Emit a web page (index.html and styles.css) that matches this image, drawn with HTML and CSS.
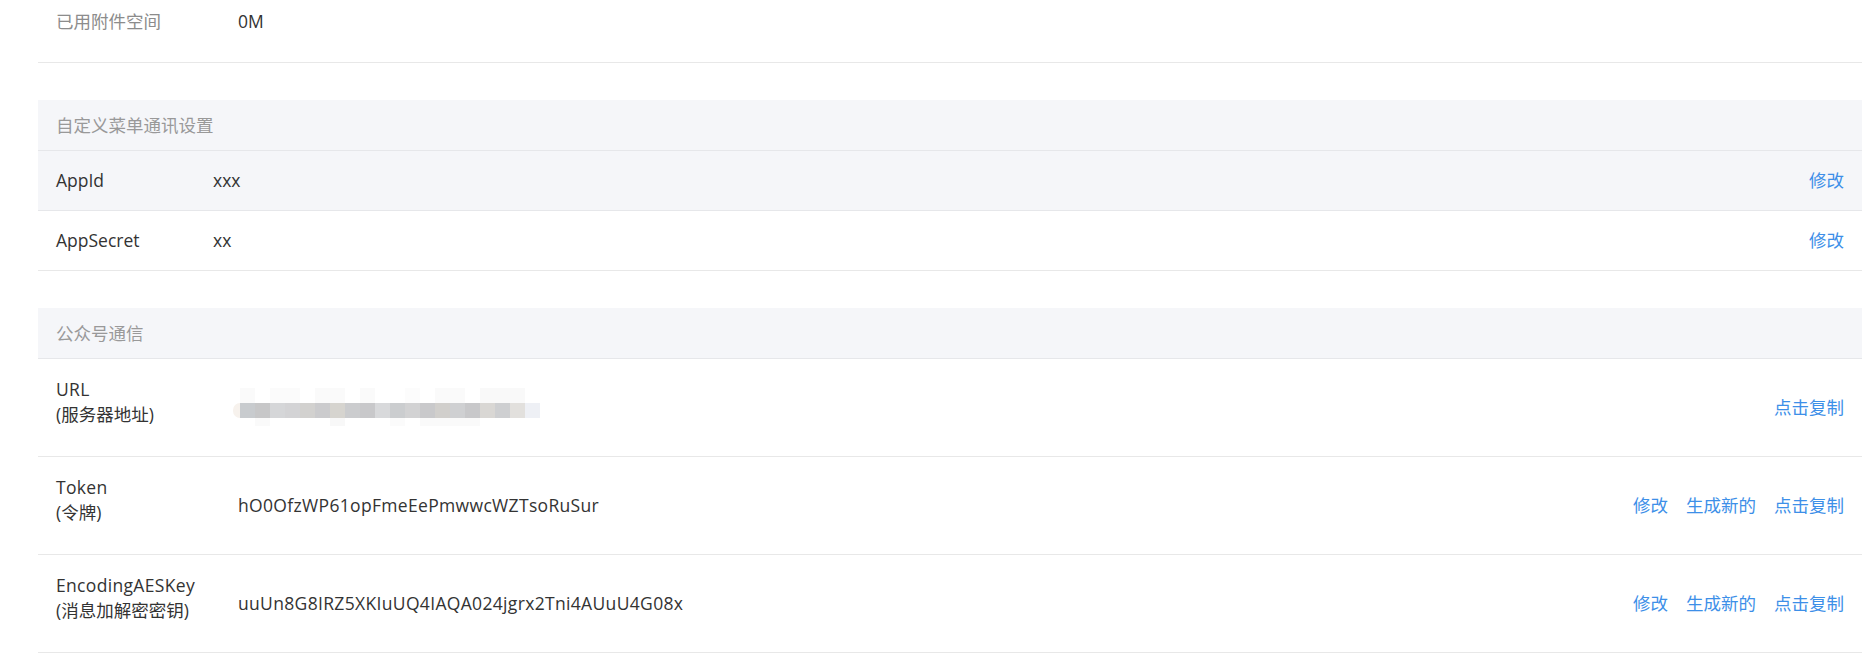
FILE: index.html
```html
<!DOCTYPE html>
<html lang="zh-CN">
<head>
<meta charset="utf-8">
<title>设置</title>
<link rel="stylesheet" href="styles.css">
</head>
<body>
<div class="page">
  <div class="stat-row">
    <span class="stat-label">已用附件空间</span>
    <span class="stat-value">0M</span>
  </div>

  <section class="panel panel--menu">
    <div class="panel-head">自定义菜单通讯设置</div>
    <div class="row row--short row--active">
      <div class="row-label">AppId</div>
      <div class="row-value">xxx</div>
      <div class="row-actions"><a class="link">修改</a></div>
    </div>
    <div class="row row--short">
      <div class="row-label">AppSecret</div>
      <div class="row-value">xx</div>
      <div class="row-actions"><a class="link">修改</a></div>
    </div>
  </section>

  <section class="panel panel--mp">
    <div class="panel-head">公众号通信</div>
    <div class="row row--tall">
      <div class="row-label"><div class="latin">URL</div><div>(服务器地址)</div></div>
      <div class="row-value"><div class="blurred"><div class="blurred-top"></div><div class="blurred-bar"></div><div class="blurred-bottom"></div></div></div>
      <div class="row-actions"><a class="link">点击复制</a></div>
    </div>
    <div class="row row--tall">
      <div class="row-label"><div class="latin">Token</div><div>(令牌)</div></div>
      <div class="row-value latin">hO0OfzWP61opFmeEePmwwcWZTsoRuSur</div>
      <div class="row-actions"><a class="link">修改</a><a class="link">生成新的</a><a class="link">点击复制</a></div>
    </div>
    <div class="row row--tall">
      <div class="row-label"><div class="latin">EncodingAESKey</div><div>(消息加解密密钥)</div></div>
      <div class="row-value latin">uuUn8G8IRZ5XKIuUQ4IAQA024jgrx2Tni4AUuU4G08x</div>
      <div class="row-actions"><a class="link">修改</a><a class="link">生成新的</a><a class="link">点击复制</a></div>
    </div>
  </section>
</div>
</body>
</html>
```

FILE: styles.css
```css
html, body {
  margin: 0;
  padding: 0;
  background: #ffffff;
}

body {
  font-family: "Open Sans", "Noto Sans CJK SC", sans-serif;
  font-size: 17.5px;
  line-height: 25px;
  color: #333333;
}

.page {
  margin-left: 38px;
  width: 1824px;
}

.stat-row {
  display: flex;
  padding: 9px 18px 28px;
  border-bottom: 1px solid #e8e8e8;
}

.stat-label {
  width: 182px;
  flex: none;
  color: #8c8c8c;
}

.stat-value {
  color: #333333;
}

.panel {
  margin-top: 37px;
}

.panel-head {
  height: 50px;
  line-height: 51px;
  padding: 0 18px;
  background: #f5f6f9;
  border-bottom: 1px solid #e6e7ea;
  color: #999999;
}

.row {
  display: flex;
  align-items: center;
  padding: 0 18px;
  border-bottom: 1px solid #e8e8e8;
}

.row--short {
  height: 59px;
}

.row--tall {
  height: 97px;
}

.row--active {
  background: #f5f6f9;
  border-bottom-color: #e6e7ea;
}

.row-label {
  flex: none;
  color: #333333;
}

.panel--menu .row-label {
  width: 157px;
}

.panel--mp .row-label {
  width: 182px;
  padding-bottom: 11px;
}

.row-value {
  flex: 1;
  color: #333333;
}

.latin {
  letter-spacing: 0.33px;
}

.row-actions {
  display: flex;
  margin-left: auto;
}

.link {
  color: #3d8fe8;
  cursor: pointer;
  margin-left: 18px;
}

.blurred {
  position: relative;
  width: 310px;
  height: 40px;
  margin-left: -5px;
}

.blurred-top {
  position: absolute;
  left: 7px;
  top: 0;
  width: 300px;
  height: 15px;
  background: linear-gradient(to right,
    #fafafa 0 15px, #ffffff 15px 30px, #fbfbfb 30px 60px, #ffffff 60px 75px,
    #fafafa 75px 105px, #ffffff 105px 120px, #fafafa 120px 135px, #ffffff 135px 165px,
    #fcfcfc 165px 180px, #ffffff 180px 195px, #fafafa 195px 225px, #ffffff 225px 240px,
    #f9f9f9 240px 285px, #ffffff 285px 300px);
}

.blurred-bar {
  position: absolute;
  left: 7px;
  top: 15px;
  width: 300px;
  height: 15px;
  background: linear-gradient(to right,
    #c8cbce 0 15px, #c7c7c8 15px 30px, #d5d6d8 30px 45px, #d3d3d5 45px 60px,
    #d2d1cf 60px 75px, #cbcbcd 75px 90px, #d6d4cf 90px 105px, #cbccce 105px 120px,
    #c8c8ca 120px 135px, #d8d9db 135px 150px, #cbcdcf 150px 165px, #d2d2d3 165px 180px,
    #c9c9cb 180px 195px, #d1cfcc 195px 210px, #cfd0d2 210px 225px, #c8c8ca 225px 240px,
    #d9d7d4 240px 255px, #cecfd1 255px 270px, #e2e0dd 270px 285px, #eef0f5 285px 300px);
}

.blurred-bar::before {
  content: "";
  position: absolute;
  left: -7px;
  top: 0;
  width: 7px;
  height: 15px;
  border-radius: 7px 0 0 7px;
  background: #f7f2ed;
}

.blurred-bottom {
  position: absolute;
  left: 7px;
  top: 30px;
  width: 300px;
  height: 8px;
  background: linear-gradient(to right,
    #ffffff 0 15px, #fafafa 15px 30px, #ffffff 30px 90px, #f8f8f8 90px 105px,
    #ffffff 105px 150px, #fbfbfb 150px 165px, #ffffff 165px 180px, #fafafa 180px 240px,
    #ffffff 240px 300px);
}
```
